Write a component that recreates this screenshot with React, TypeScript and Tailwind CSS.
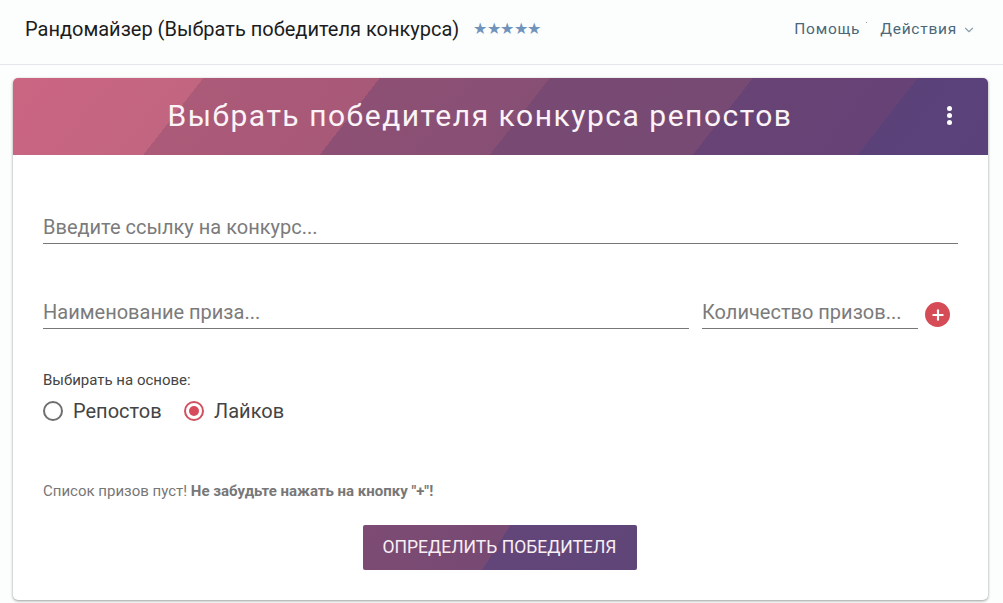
import React from 'react';
import { ChevronDown, Plus } from 'lucide-react';

const Field = ({ placeholder, className }: { placeholder: string; className: string }) => (
  <input
    placeholder={placeholder}
    className={`h-[32px] min-w-0 border-b border-[#777777] bg-transparent pb-[2px] text-[20px] text-[#333333] outline-none placeholder:text-[#7b7b7b] placeholder:opacity-100 ${className}`}
  />
);

const Radio = ({ label, checked }: { label: string; checked?: boolean }) => (
  <label className="flex items-center gap-[10px]">
    <span className={`flex h-[20px] w-[20px] items-center justify-center rounded-full border-2 ${checked ? 'border-[#d0525f]' : 'border-[#6f6f6f]'}`}>
      {checked && <span className="h-[10px] w-[10px] rounded-full bg-[#d64c5a]" />}
    </span>
    <span className="text-[20px] text-[#444444]">{label}</span>
  </label>
);

export default function App() {
  return (
    <div className="h-[603px] w-[1003px] overflow-hidden bg-[#fcfefe] font-['Roboto',sans-serif]">
      {/* Top bar */}
      <header className="flex h-[65px] items-center justify-between border-b border-[#e4e8ea] pb-[6px] pl-[25px] pr-[27px]">
        <div className="flex items-center gap-[14px]">
          <h1 className="text-[20px] text-[#1c1c1c]">Рандомайзер (Выбрать победителя конкурса)</h1>
          <span className="text-[16px] leading-none tracking-[-0.5px] text-[#7093bb]">★★★★★</span>
        </div>
        <nav className="flex items-center gap-[20px] pt-[2px] text-[15.5px] tracking-[0.75px] text-[#4b6778]">
          <a className="relative">
            Помощь
            <span className="absolute right-[-7px] top-[4px] h-[1px] w-[1px] bg-[#8fa0aa]" />
          </a>
          <a className="flex items-center gap-[5px]">
            Действия
            <ChevronDown size={14} className="text-[#8fa0aa]" />
          </a>
        </nav>
      </header>

      {/* Card */}
      <main className="pl-[13px] pr-[15px] pt-[13px]">
        <section className="h-[522px] overflow-hidden rounded-[5px] bg-white shadow-[0_1px_3px_rgba(0,0,0,0.4)]">
          <div className="relative flex h-[77px] items-center justify-center bg-[linear-gradient(128deg,#cb6582_0px,#c26581_150px,#ab5a78_150px,#a85977_289px,#8d5074_289px,#884f74_423px,#784a73_423px,#774a73_583px,#684375_583px,#664276_713px,#5a4279_713px,#5a417a_100%)] pb-[2px] pr-[41px]">
            <h2 className="text-[30px] tracking-[1.52px] text-[#fbf3f7]">Выбрать победителя конкурса репостов</h2>
            <div className="absolute right-[36px] top-[28px] flex flex-col gap-[2px]">
              <span className="h-[5px] w-[5px] rounded-full bg-white" />
              <span className="h-[5px] w-[5px] rounded-full bg-white" />
              <span className="h-[5px] w-[5px] rounded-full bg-white" />
            </div>
          </div>

          <div className="flex flex-col px-[30px] pt-[57px]">
            <Field placeholder="Введите ссылку на конкурс..." className="w-full" />

            <div className="mt-[53px] flex items-end">
              <Field placeholder="Наименование приза..." className="w-[646px]" />
              <Field placeholder="Количество призов..." className="ml-[13px] w-[216px]" />
              <button className="mb-[2px] ml-[7px] flex h-[25px] w-[25px] items-center justify-center rounded-full bg-[#d64c56]">
                <Plus size={16} strokeWidth={3.2} className="text-white" />
              </button>
            </div>

            <p className="mt-[42px] text-[15px] leading-[18px] text-[#444444]">Выбирать на основе:</p>
            <div className="mt-[10px] flex h-[24px] items-center gap-[22.5px]">
              <Radio label="Репостов" />
              <Radio label="Лайков" checked />
            </div>

            <p className="mt-[59px] text-[15px] leading-[18px] text-[#777777]">
              Список призов пуст! <b className="font-bold">Не забудьте нажать на кнопку "+"!</b>
            </p>

            <button className="mx-auto mt-[25px] h-[45px] w-[274px] -translate-x-[1px] rounded-[2px] bg-[linear-gradient(122deg,#7d4b73_0px,#774a73_125px,#634679_125px,#5f4578_100%)] text-[17.5px] text-[#f8eff5]">
              ОПРЕДЕЛИТЬ ПОБЕДИТЕЛЯ
            </button>
          </div>
        </section>
      </main>
    </div>
  );
}
